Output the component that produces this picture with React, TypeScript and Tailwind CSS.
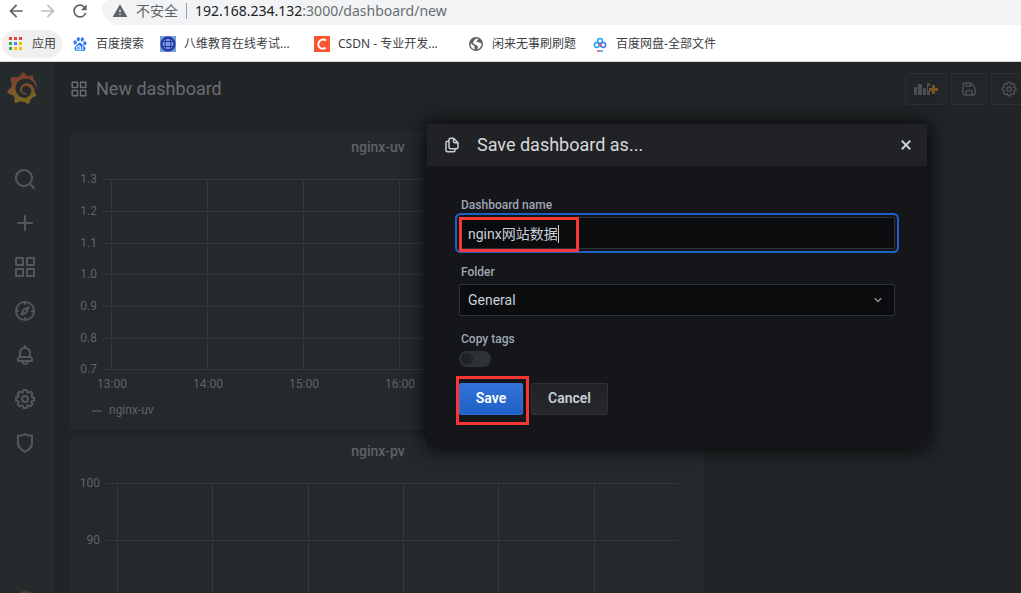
import React, { useState } from 'react'
import { MdArrowBack, MdArrowForward, MdRefresh, MdWarning } from 'react-icons/md'
import { SiBaidu, SiGrafana } from 'react-icons/si'

const icons = {
  apps: 'M10,13H3a1,1,0,0,0-1,1v7a1,1,0,0,0,1,1h7a1,1,0,0,0,1-1V14A1,1,0,0,0,10,13ZM9,20H4V15H9ZM21,2H14a1,1,0,0,0-1,1v7a1,1,0,0,0,1,1h7a1,1,0,0,0,1-1V3A1,1,0,0,0,21,2ZM20,9H15V4h5Zm1,4H14a1,1,0,0,0-1,1v7a1,1,0,0,0,1,1h7a1,1,0,0,0,1-1V14A1,1,0,0,0,21,13Zm-1,7H15V15h5ZM10,2H3A1,1,0,0,0,2,3v7a1,1,0,0,0,1,1h7a1,1,0,0,0,1-1V3A1,1,0,0,0,10,2ZM9,9H4V4H9Z',
  search: 'M21.71,20.29,18,16.61A9,9,0,1,0,16.61,18l3.68,3.68a1,1,0,0,0,1.42,0A1,1,0,0,0,21.71,20.29ZM11,18a7,7,0,1,1,7-7A7,7,0,0,1,11,18Z',
  plus: 'M19,11H13V5a1,1,0,0,0-2,0v6H5a1,1,0,0,0,0,2h6v6a1,1,0,0,0,2,0V13h6a1,1,0,0,0,0-2Z',
  compass: 'M12,2A10,10,0,1,0,22,12,10,10,0,0,0,12,2Zm1,17.93V19a1,1,0,0,0-2,0v.93A8,8,0,0,1,4.07,13H5a1,1,0,0,0,0-2H4.07A8,8,0,0,1,11,4.07V5a1,1,0,0,0,2,0V4.07A8,8,0,0,1,19.93,11H19a1,1,0,0,0,0,2h.93A8,8,0,0,1,13,19.93ZM15.14,7.55l-5,2.12a1,1,0,0,0-.52.52l-2.12,5a1,1,0,0,0,.21,1.1,1,1,0,0,0,.7.29.93.93,0,0,0,.4-.08l5-2.12a1,1,0,0,0,.52-.52l2.12-5a1,1,0,0,0-1.31-1.31Zm-2.49,5.1-2.28,1,1-2.28,2.28-1Z',
  bell: 'M18,13.18V10a6,6,0,0,0-5-5.91V3a1,1,0,0,0-2,0V4.09A6,6,0,0,0,6,10v3.18A3,3,0,0,0,4,16v2a1,1,0,0,0,1,1H8.14a4,4,0,0,0,7.72,0H19a1,1,0,0,0,1-1V16A3,3,0,0,0,18,13.18ZM8,10a4,4,0,0,1,8,0v3H8Zm4,10a2,2,0,0,1-1.72-1h3.44A2,2,0,0,1,12,20Zm6-3H6V16a1,1,0,0,1,1-1H17a1,1,0,0,1,1,1Z',
  cog: 'M21.32,9.55l-1.89-.63.89-1.78A1,1,0,0,0,20.13,6L18,3.87a1,1,0,0,0-1.15-.19l-1.78.89-.63-1.89A1,1,0,0,0,13.5,2h-3a1,1,0,0,0-.95.68L8.92,4.57,7.14,3.68A1,1,0,0,0,6,3.87L3.87,6a1,1,0,0,0-.19,1.15l.89,1.78-1.89.63A1,1,0,0,0,2,10.5v3a1,1,0,0,0,.68.95l1.89.63-.89,1.78A1,1,0,0,0,3.87,18L6,20.13a1,1,0,0,0,1.15.19l1.78-.89.63,1.89a1,1,0,0,0,.95.68h3a1,1,0,0,0,.95-.68l.63-1.89,1.78.89A1,1,0,0,0,18,20.13L20.13,18a1,1,0,0,0,.19-1.15l-.89-1.78,1.89-.63A1,1,0,0,0,22,13.5v-3A1,1,0,0,0,21.32,9.55ZM20,12.78l-1.2.4A2,2,0,0,0,17.64,16l.57,1.14-1.1,1.1L16,17.64a2,2,0,0,0-2.79,1.16l-.4,1.2H11.22l-.4-1.2A2,2,0,0,0,8,17.64l-1.14.57-1.1-1.1L6.36,16A2,2,0,0,0,5.2,13.18L4,12.78V11.22l1.2-.4A2,2,0,0,0,6.36,8L5.79,6.89l1.1-1.1L8,6.36A2,2,0,0,0,10.82,5.2l.4-1.2h1.56l.4,1.2A2,2,0,0,0,16,6.36l1.14-.57,1.1,1.1L17.64,8a2,2,0,0,0,1.16,2.79l1.2.4ZM12,8a4,4,0,1,0,4,4A4,4,0,0,0,12,8Zm0,6a2,2,0,1,1,2-2A2,2,0,0,1,12,14Z',
  shield: 'M19.63,3.65a1,1,0,0,0-.84-.2,8,8,0,0,1-6.22-1.27,1,1,0,0,0-1.14,0A8,8,0,0,1,5.21,3.45a1,1,0,0,0-.84.2A1,1,0,0,0,4,4.43v7.45a9,9,0,0,0,3.77,7.33l3.65,2.6a1,1,0,0,0,1.16,0l3.65-2.6A9,9,0,0,0,20,11.88V4.43A1,1,0,0,0,19.63,3.65ZM18,11.88a7,7,0,0,1-2.93,5.7L12,19.77,8.93,17.58A7,7,0,0,1,6,11.88V5.58a10,10,0,0,0,6-1.39,10,10,0,0,0,6,1.39Z',
  save: 'M20.71,9.29l-6-6a1,1,0,0,0-.32-.21A1.09,1.09,0,0,0,14,3H6A3,3,0,0,0,3,6V18a3,3,0,0,0,3,3H18a3,3,0,0,0,3-3V10A1,1,0,0,0,20.71,9.29ZM9,5h4V7H9Zm6,14H9V16a1,1,0,0,1,1-1h4a1,1,0,0,1,1,1Zm4-1a1,1,0,0,1-1,1H17V16a3,3,0,0,0-3-3H10a3,3,0,0,0-3,3v3H6a1,1,0,0,1-1-1V6A1,1,0,0,1,6,5H7V8A1,1,0,0,0,8,9h6a1,1,0,0,0,1-1V6.41l4,4Z',
  copy: 'M21,8.94a1.31,1.31,0,0,0-.06-.27l0-.09a1.07,1.07,0,0,0-.19-.28h0l-6-6h0a1.07,1.07,0,0,0-.28-.19.32.32,0,0,0-.09,0A.88.88,0,0,0,14.05,2H10A3,3,0,0,0,7,5V6H6A3,3,0,0,0,3,9V19a3,3,0,0,0,3,3h8a3,3,0,0,0,3-3V18h1a3,3,0,0,0,3-3V9S21,9,21,8.94ZM15,5.41,17.59,8H16a1,1,0,0,1-1-1ZM15,19a1,1,0,0,1-1,1H6a1,1,0,0,1-1-1V9A1,1,0,0,1,6,8H7v7a3,3,0,0,0,3,3h5Zm4-4a1,1,0,0,1-1,1H10a1,1,0,0,1-1-1V5a1,1,0,0,1,1-1h3V7a3,3,0,0,0,3,3h3Z',
  angleDown: 'M17,9.17a1,1,0,0,0-1.41,0L12,12.71,8.46,9.17a1,1,0,0,0-1.41,0,1,1,0,0,0,0,1.42l4.24,4.24a1,1,0,0,0,1.42,0L17,10.59A1,1,0,0,0,17,9.17Z',
}

type IconName = keyof typeof icons

function Icon({ name, className }: { name: IconName; className: string }) {
  return (
    <svg viewBox="0 0 24 24" fill="currentColor" className={className} aria-hidden="true">
      <path d={icons[name]} />
    </svg>
  )
}

const appColors = ['#ea4335', '#ea4335', '#ea4335', '#34a853', '#4285f4', '#fbbc05', '#34a853', '#fbbc05', '#fbbc05']

function AppsGrid() {
  return (
    <svg viewBox="0 0 13 13" className="w-[13px] h-[13px]">
      {appColors.map((c, i) => (
        <rect key={i} x={(i % 3) * 5} y={Math.floor(i / 3) * 5} width="3" height="3" fill={c} />
      ))}
    </svg>
  )
}

function GlobeBadge() {
  return (
    <svg viewBox="0 0 16 16" className="w-4 h-4 shrink-0" fill="none" stroke="#2b2f9e" strokeWidth="1">
      <rect width="16" height="16" fill="#6f9fd8" stroke="none" />
      <circle cx="8" cy="8" r="6.5" strokeWidth="2" />
      <ellipse cx="8" cy="8" rx="3" ry="6.4" />
      <path d="M2 5.5h12M2 10.5h12" />
    </svg>
  )
}

function CsdnBadge() {
  return (
    <svg viewBox="0 0 16 16" className="w-4 h-4 shrink-0">
      <rect width="16" height="16" fill="#fc5531" />
      <path d="M12 4.6C10.7 3.5 8.3 3.2 6.5 4.3C4 5.8 3.6 9.6 5.4 11.4C7 13 9.8 12.7 11.6 11.6" fill="none" stroke="#fff" strokeWidth="2" />
    </svg>
  )
}

function WorldIcon() {
  return (
    <svg viewBox="0 0 16 16" className="w-4 h-4 shrink-0">
      <circle cx="8" cy="8" r="7" fill="#5f6368" />
      <path d="M2.5 7.2L6.5 10.3V13.6C4 13 2.3 10.6 2.5 7.2ZM6.2 4.5C7 2.8 9 2.4 10.6 3C9.8 4.3 8.2 4.3 8.4 5.8C10.5 6.2 11.6 7 13.7 7.5C13.5 10.5 11.8 12.6 9.5 13.4C9.3 12 10.7 11.2 9.6 10C8.2 9 6 8.7 5.2 7.3C5 6.4 5.4 5.3 6.2 4.5Z" fill="#fff" />
    </svg>
  )
}

function PanIcon() {
  return (
    <svg viewBox="0 0 16 16" className="w-4 h-4 shrink-0" fill="none" strokeWidth="1.5">
      <circle cx="8" cy="5" r="2.4" stroke="#14a5f5" />
      <circle cx="4.8" cy="9" r="2.4" stroke="#14a5f5" />
      <circle cx="11.2" cy="9" r="2.4" stroke="#3b7cf0" />
      <path d="M6.5 7.3L9.6 10.6" stroke="#f0405a" />
      <path d="M5 15h3" stroke="#f0405a" />
      <path d="M8 15h3" stroke="#14a5f5" />
    </svg>
  )
}

function BrowserBar() {
  return (
    <div className="shrink-0 bg-white border-b border-[#d5d7da] font-['Noto_Sans','Noto_Sans_CJK_SC',sans-serif]">
      <div className="flex h-[25px] items-center">
        <div className="flex items-center gap-3 pl-1.5 pb-1 text-[#5f6368]">
          <button aria-label="Back"><MdArrowBack className="w-5 h-5" /></button>
          <button aria-label="Forward" className="text-[#bcbec1]"><MdArrowForward className="w-5 h-5" /></button>
          <button aria-label="Reload"><MdRefresh className="w-5 h-5" /></button>
        </div>
        <div className="flex flex-1 h-full items-center ml-3 pl-2.5 pb-1 rounded-bl-[18px] rounded-tl-lg bg-[#f1f3f4] text-sm text-[#5f6368]">
          <MdWarning className="w-4 h-4" />
          <span className="ml-2">不安全</span>
          <span className="ml-2 mr-2 h-4 w-px bg-[#9a9da1]" />
          <span className="text-[#6a6d71]"><span className="text-[#202124]">192.168.234.132</span>:3000/dashboard/new</span>
        </div>
      </div>
      <nav className="flex h-9 items-center gap-4 pt-px whitespace-nowrap text-xs text-[#3c4043]">
        <a href="#" className="flex h-7 w-[60px] items-center gap-2.5 ml-0.5 -mr-1.5 pl-[7px] rounded-full bg-[#efefef]"><AppsGrid />应用</a>
        <a href="#" className="flex items-center gap-2"><SiBaidu className="w-4 h-3.5 shrink-0 text-[#2f7df6]" />百度搜索</a>
        <a href="#" className="flex items-center gap-2"><GlobeBadge /><span className="w-[114px]">八维教育在线考试...</span></a>
        <a href="#" className="flex items-center gap-2"><CsdnBadge /><span className="w-[114px]">CSDN - 专业开发...</span></a>
        <a href="#" className="flex items-center gap-2"><WorldIcon />闲来无事刷刷题</a>
        <a href="#" className="flex items-center gap-2"><PanIcon />百度网盘-全部文件</a>
      </nav>
    </div>
  )
}

const menu: { name: IconName; label: string }[] = [
  { name: 'search', label: 'Search' },
  { name: 'plus', label: 'Create' },
  { name: 'apps', label: 'Dashboards' },
  { name: 'compass', label: 'Explore' },
  { name: 'bell', label: 'Alerting' },
  { name: 'cog', label: 'Configuration' },
  { name: 'shield', label: 'Server Admin' },
]

function SideMenu() {
  return (
    <aside className="flex w-[54px] shrink-0 flex-col pt-2.5 bg-[#252a2d] text-[#53585d] shadow-[0_0_6px_#1a1d1f]">
      <a href="#" aria-label="Home" className="ml-1.5">
        <svg className="absolute w-0 h-0">
          <defs>
            <linearGradient id="logo" x1="0" y1="0" x2="0" y2="1">
              <stop offset="0" stopColor="#7a3a30" />
              <stop offset="1" stopColor="#7d6a23" />
            </linearGradient>
          </defs>
        </svg>
        <SiGrafana className="w-8 h-8" style={{ fill: 'url(#logo)' }} />
      </a>
      <nav className="flex flex-col gap-5 pl-[13px] pt-[63px]">
        {menu.map((m) => (
          <a key={m.name} href="#" aria-label={m.label}><Icon name={m.name} className="w-6 h-6" /></a>
        ))}
      </nav>
      <div className="mt-auto ml-[13px] -mb-[22px] w-6 h-6 shrink-0 rounded-full bg-[#3f4524]" />
    </aside>
  )
}

type ChartProps = {
  height: number
  bottom: number
  left: number
  labelEnd: number
  rows: { y: number; label: string }[]
  cols: { x: number; label?: string }[]
}

function Chart({ height, bottom, left, labelEnd, rows, cols }: ChartProps) {
  return (
    <svg width="100%" height={height} className="block text-xs" fill="#5f6367">
      {rows.map((r) => (
        <g key={r.y}>
          <rect x={left} y={r.y} width={607 - left} height="1" fill="#33373a" />
          <text x={labelEnd} y={r.y + 4} textAnchor="end">{r.label}</text>
        </g>
      ))}
      {cols.map((c) => (
        <g key={c.x}>
          <rect x={c.x} y={rows[0].y} width="1" height={bottom - rows[0].y} fill="#33373a" />
          {c.label && <text x={c.x + 1} y={bottom + 19} textAnchor="middle">{c.label}</text>}
        </g>
      ))}
    </svg>
  )
}

function Panel({ title, children }: { title: string; children: React.ReactNode }) {
  return (
    <section className="col-span-2 rounded-[3px] border border-[#2a2d30] bg-[#25292c]">
      <h2 className="pr-[18px] text-center text-sm leading-[26px] font-medium text-[#5f6367]">{title}</h2>
      {children}
    </section>
  )
}

const uvRows = [
  { y: 19, label: '1.3' },
  { y: 51, label: '1.2' },
  { y: 83, label: '1.1' },
  { y: 114, label: '1.0' },
  { y: 146, label: '0.9' },
  { y: 178, label: '0.8' },
  { y: 209, label: '0.7' },
]

const uvCols = [
  { x: 40, label: '13:00' },
  { x: 136, label: '14:00' },
  { x: 232, label: '15:00' },
  { x: 328, label: '16:00' },
]

const pvRows = [
  { y: 19, label: '100' },
  { y: 76, label: '90' },
]

const pvCols = [{ x: 46 }, { x: 141 }, { x: 237 }, { x: 332 }, { x: 427 }, { x: 523 }]

function Dashboard() {
  const button = 'flex h-8 w-9 items-center justify-center rounded-[2px] border border-[#2c3033] bg-[#222629]'
  return (
    <main className="min-w-0 flex-1 overflow-hidden bg-[#212527] pl-4">
      <header className="flex h-[71px] items-start pt-[11px] text-[#6a6e71]">
        <Icon name="apps" className="w-[18px] h-8" />
        <h1 className="ml-2 flex-1 text-lg leading-8">New dashboard</h1>
        <div className="flex gap-1 -mr-1.5 text-[#4c5053]">
          <button aria-label="Add panel" className="flex h-8 w-[42px] items-center justify-center rounded-[2px] border border-[#2c3033] bg-[#222629]">
            <svg viewBox="0 0 24 16" className="w-6 h-4" fill="currentColor">
              <path d="M0 6h3v8H0zM4 3h4v11H4zM9 7h3v7H9zM13 2h3v3h-2v5h2v4h-3z" />
              <path d="M18 4h3v3h3v3h-3v3h-3v-3h-3V7h3z" fill="#7a5326" />
            </svg>
          </button>
          <button aria-label="Save dashboard" className={button}><Icon name="save" className="w-[18px] h-[18px]" /></button>
          <button aria-label="Dashboard settings" className={button}><Icon name="cog" className="w-[18px] h-[18px]" /></button>
        </div>
      </header>
      <div className="grid grid-cols-3 gap-y-2">
        <Panel title="nginx-uv">
          <Chart height={238} bottom={209} left={31} labelEnd={26} rows={uvRows} cols={uvCols} />
          <div className="flex h-[30px] items-start gap-[7px] pl-[21px] pt-1 text-xs text-[#5f6367]">
            <span className="mt-2 h-0.5 w-2.5 bg-[#3f4f3c]" />
            nginx-uv
          </div>
        </Panel>
        <Panel title="nginx-pv">
          <Chart height={238} bottom={209} left={35} labelEnd={29} rows={pvRows} cols={pvCols} />
        </Panel>
      </div>
    </main>
  )
}

function SaveModal() {
  const [name, setName] = useState('nginx网站数据')
  const label = 'mb-1 block pl-0.5 text-xs leading-4 font-medium text-[#9fa7b3]'
  return (
    <div role="dialog" aria-labelledby="modal-title" className="absolute left-[427px] top-[124px] w-[500px] bg-[#141619] text-[#c7d0d9] shadow-[0_0_20px_#000]">
      <div className="flex h-[42px] items-center bg-[#202226] px-4">
        <Icon name="copy" className="w-[18px] h-[18px]" />
        <h2 id="modal-title" className="flex-1 ml-4 text-lg text-[#d8d9da]">Save dashboard as...</h2>
        <button aria-label="Close">
          <svg viewBox="0 0 10 10" className="w-2.5 h-2.5" stroke="currentColor" strokeWidth="2">
            <path d="M0.8 0.8L9.2 9.2M9.2 0.8L0.8 9.2" />
          </svg>
        </button>
      </div>
      <form className="flex flex-col gap-[15px] px-8 pt-[31px] pb-8" onSubmit={(e) => e.preventDefault()}>
        <div>
          <label htmlFor="name" className={label}>Dashboard name</label>
          <div className="relative">
            <input
              id="name"
              value={name}
              onChange={(e) => setName(e.target.value)}
              className="block h-8 w-full rounded-[2px] border border-[#2c3235] bg-[#0b0c0e] px-2 text-sm outline-none shadow-[0_0_0_2px_#141619,0_0_0_4px_#1f60c4]"
            />
            <span className="absolute left-[99px] top-2 h-[18px] w-px bg-[#c7d0d9]" />
            {/* highlight */}
            <span className="pointer-events-none absolute left-0 top-0 h-[35px] w-[120px] border-3 border-[#f93636]" />
          </div>
        </div>
        <div>
          <label htmlFor="folder" className={label}>Folder</label>
          <div className="relative">
            <select id="folder" className="block h-8 w-full appearance-none rounded-[2px] border border-[#2c3235] bg-[#0b0c0e] px-2 text-sm">
              <option>General</option>
            </select>
            <Icon name="angleDown" className="pointer-events-none absolute right-[9px] top-2 w-4 h-4 text-[#8e9196]" />
          </div>
        </div>
        <div>
          <label htmlFor="tags" className={label}>Copy tags</label>
          <input
            id="tags"
            type="checkbox"
            className="block h-4 w-8 appearance-none rounded-full bg-[#2c3235] before:block before:h-3 before:w-3 before:translate-x-0.5 before:translate-y-0.5 before:rounded-full before:bg-[#202226]"
          />
        </div>
        <div className="flex gap-2 pt-px text-sm leading-5 font-semibold">
          <div className="relative">
            <button type="submit" className="h-8 w-16 pb-0.5 rounded-[2px] border border-[#2f6fd6] bg-linear-to-b from-[#3274d9] to-[#1f60c4] text-white">Save</button>
            <span className="pointer-events-none absolute -left-[3px] -top-[7px] h-[49px] w-[73px] border-3 border-[#f93636]" />
          </div>
          <button type="button" className="h-8 w-[77px] pb-0.5 rounded-[2px] border border-[#2f3337] bg-linear-to-b from-[#202226] to-[#26282d]">Cancel</button>
        </div>
      </form>
    </div>
  )
}

export default function App() {
  return (
    <div className="relative flex h-screen flex-col overflow-hidden bg-[#212527]">
      <BrowserBar />
      <div className="flex min-h-0 flex-1 overflow-hidden font-[Roboto,'Noto_Sans_CJK_SC',sans-serif]">
        <SideMenu />
        <Dashboard />
      </div>
      <div className="font-[Roboto,'Noto_Sans_CJK_SC',sans-serif]">
        <SaveModal />
      </div>
    </div>
  )
}
